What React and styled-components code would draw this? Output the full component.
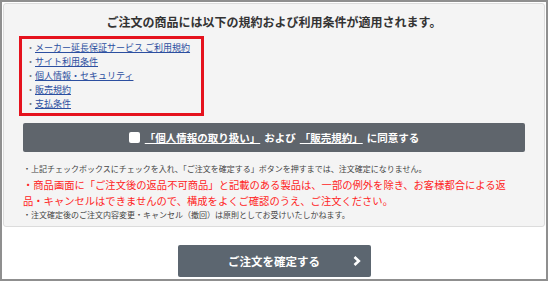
import React from "react";
import styled, { createGlobalStyle } from "styled-components";

const GlobalStyle = createGlobalStyle`
  html, body {
    margin: 0;
    padding: 0;
    background: #ffffff;
  }
  body {
    font-family: "Noto Sans CJK JP", "Noto Sans", sans-serif;
  }
`;

const Frame = styled.div`
  box-sizing: border-box;
  width: 548px;
  height: 281px;
  border: 2px solid #8f8f8f;
  padding: 1px;
  background: #ffffff;
`;

const Panel = styled.div`
  box-sizing: border-box;
  background: #f4f4f4;
  border: 1px solid #dcdcdc;
  border-radius: 3px;
  padding: 9px 15px 5px;
`;

const Title = styled.h2`
  margin: 0;
  font-size: 12px;
  line-height: 18px;
  font-weight: bold;
  color: #333333;
  text-align: center;
`;

const TermsBox = styled.ul`
  box-sizing: border-box;
  width: 185px;
  margin: 5px 0 0;
  padding: 2px 0 2px 4px;
  border: 3px solid #e5121d;
  list-style: none;
`;

const TermItem = styled.li`
  display: flex;
  font-size: 9px;
  line-height: 14px;

  &::before {
    content: "・";
    width: 9px;
    color: #777777;
  }
`;

const TermLink = styled.a`
  color: #2c4fa0;
  text-decoration: underline;
  white-space: nowrap;
`;

const AgreeBar = styled.label`
  display: flex;
  justify-content: center;
  align-items: center;
  gap: 4px;
  height: 29px;
  margin: 7px 4px 0;
  background: #5f656c;
  border-radius: 2px;
  color: #ffffff;
  font-size: 10.5px;
  font-weight: bold;
  cursor: pointer;
`;

const Box = styled.span`
  width: 11px;
  height: 11px;
  background: #ffffff;
  border-radius: 2px;
  margin-right: 1px;
`;

const AgreeLink = styled.span`
  text-decoration: underline;
`;

const Notes = styled.div`
  margin: 11px 4px 0;
`;

const Note = styled.p`
  margin: 0;
  font-size: 8px;
  line-height: 12px;
  color: #444444;
  white-space: nowrap;
`;

const Warning = styled.p`
  margin: 2px 0 0;
  font-size: 10.3px;
  line-height: 16px;
  color: #ff2424;
  white-space: nowrap;
`;

const ButtonRow = styled.div`
  display: flex;
  justify-content: center;
  margin-top: 18px;
`;

const ConfirmButton = styled.button`
  position: relative;
  width: 193px;
  height: 32px;
  border: 0;
  border-radius: 2px;
  background: #5c6670;
  color: #ffffff;
  font-family: inherit;
  font-size: 11.5px;
  font-weight: bold;
  cursor: pointer;
`;

const Chevron = styled.svg`
  position: absolute;
  right: 10px;
  top: 11px;
`;

const terms = [
  "メーカー延長保証サービス ご利用規約",
  "サイト利用条件",
  "個人情報・セキュリティ",
  "販売規約",
  "支払条件",
];

export default function App() {
  return (
    <>
      <GlobalStyle />
      <Frame>
        <Panel>
          <Title>ご注文の商品には以下の規約および利用条件が適用されます。</Title>
          <TermsBox>
            {terms.map((t) => (
              <TermItem key={t}>
                <TermLink href="#">{t}</TermLink>
              </TermItem>
            ))}
          </TermsBox>
          <AgreeBar>
            <Box />
            <AgreeLink>「個人情報の取り扱い」</AgreeLink>
            <span>および</span>
            <AgreeLink>「販売規約」</AgreeLink>
            <span>に同意する</span>
          </AgreeBar>
          <Notes>
            <Note>
              ・上記チェックボックスにチェックを入れ、「ご注文を確定する」ボタンを押すまでは、注文確定になりません。
            </Note>
            <Warning>
              ・商品画面に「ご注文後の返品不可商品」と記載のある製品は、一部の例外を除き、お客様都合による返
              <br />
              品・キャンセルはできませんので、構成をよくご確認のうえ、ご注文ください。
            </Warning>
            <Note>・注文確定後のご注文内容変更・キャンセル（撤回）は原則としてお受けいたしかねます。</Note>
          </Notes>
        </Panel>
        <ButtonRow>
          <ConfirmButton>
            ご注文を確定する
            <Chevron width="8" height="10" viewBox="0 0 8 10">
              <path d="M1.5 1 L5.8 5 L1.5 9" fill="none" stroke="#ffffff" strokeWidth="2.6" />
            </Chevron>
          </ConfirmButton>
        </ButtonRow>
      </Frame>
    </>
  );
}
